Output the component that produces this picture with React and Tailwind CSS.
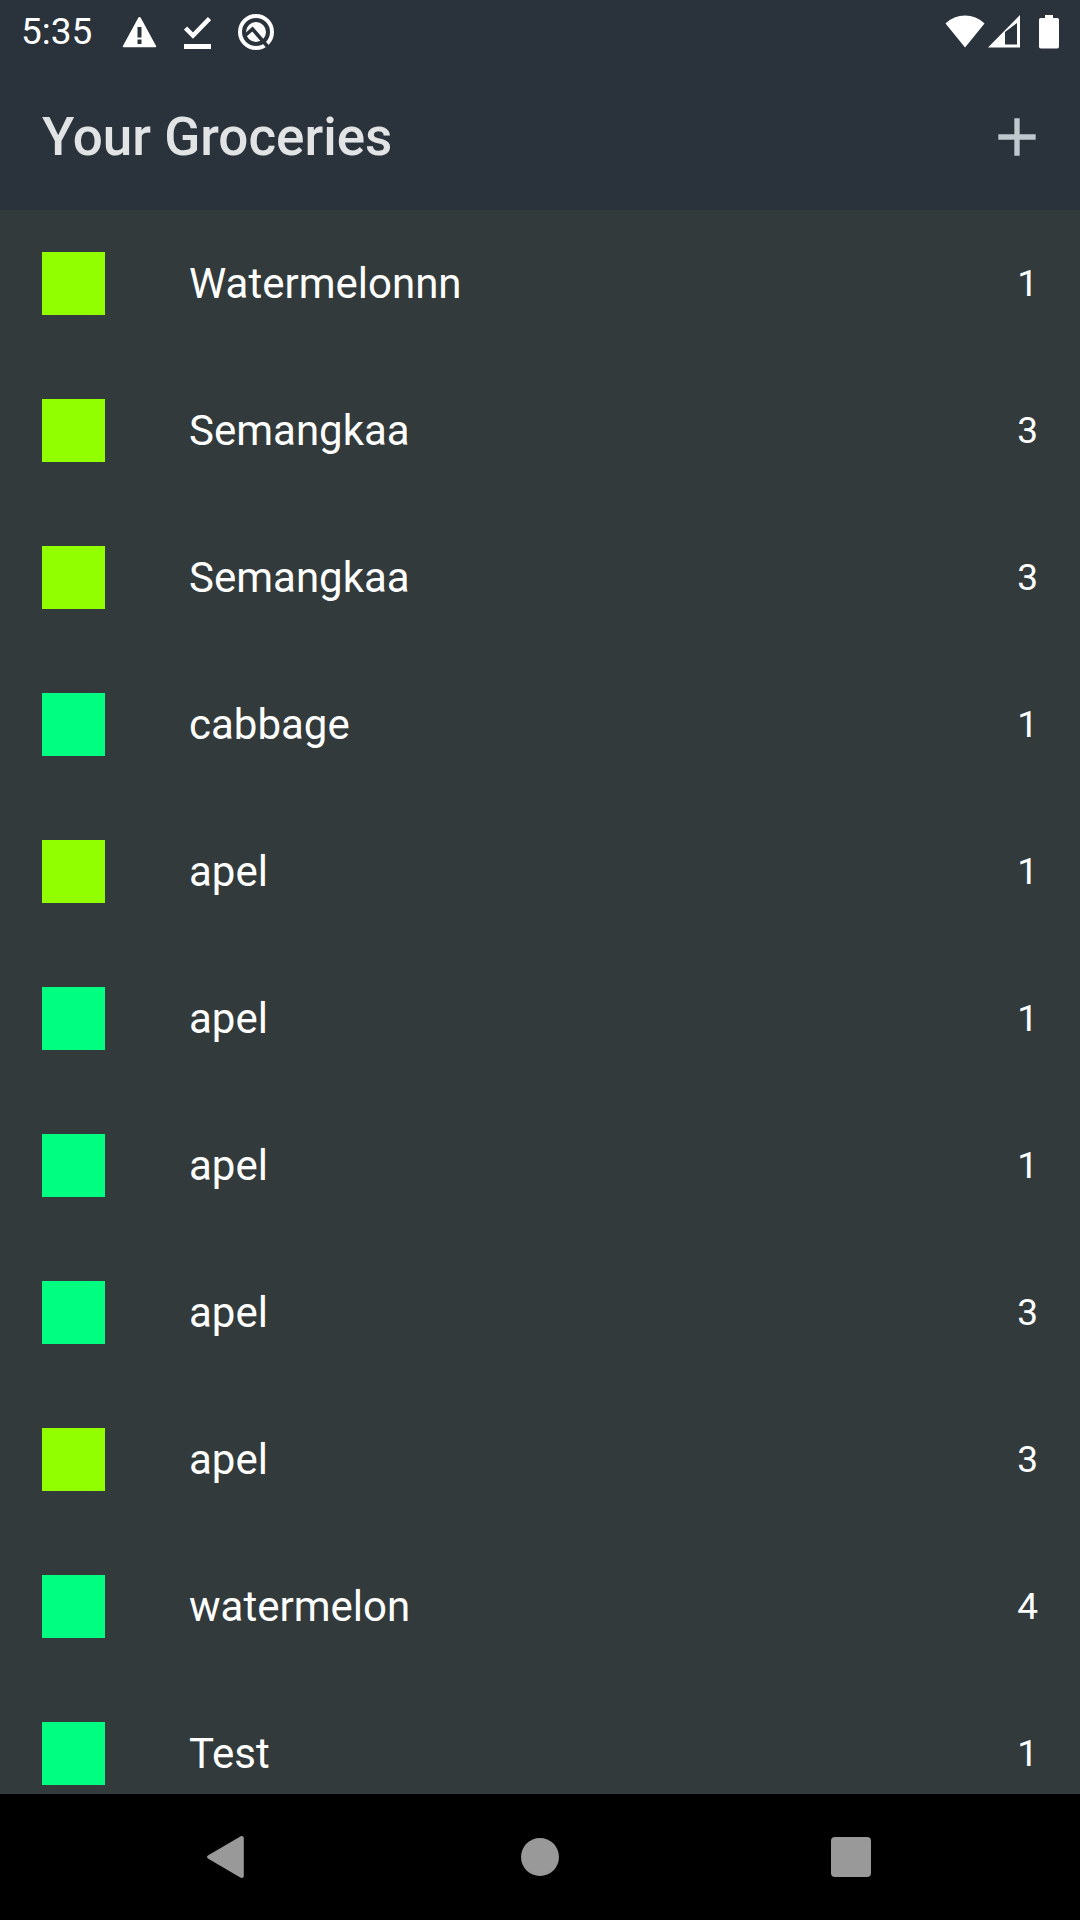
const FRUIT = "bg-[#91ff00]";
const VEGETABLE = "bg-[#00ff80]";

const groceries = [
  { name: "Watermelonnn", quantity: 1, color: FRUIT },
  { name: "Semangkaa", quantity: 3, color: FRUIT },
  { name: "Semangkaa", quantity: 3, color: FRUIT },
  { name: "cabbage", quantity: 1, color: VEGETABLE },
  { name: "apel", quantity: 1, color: FRUIT },
  { name: "apel", quantity: 1, color: VEGETABLE },
  { name: "apel", quantity: 1, color: VEGETABLE },
  { name: "apel", quantity: 3, color: VEGETABLE },
  { name: "apel", quantity: 3, color: FRUIT },
  { name: "watermelon", quantity: 4, color: VEGETABLE },
  { name: "Test", quantity: 1, color: VEGETABLE },
];

function StatusBar() {
  return (
    <div className="flex h-[63px] shrink-0 items-center justify-between pr-[21px] pl-[21px] text-white">
      <div className="flex items-center">
        <span className="mr-[30px] text-[37px] leading-[45px]">5:35</span>
        <div className="flex items-center gap-[27px]">
          <svg className="h-9 w-[35px]" viewBox="0 0 35 36" fill="currentColor" aria-hidden="true">
            <path
              fillRule="evenodd"
              d="M16.400 3.600a1.200 1.200 0 0 1 2.200 0L34.100 32a.9.9 0 0 1-.8 1.300H1.700A.9.900 0 0 1 .9 32ZM15.500 13v10.500h4V13Zm0 12.500v4.500h4v-4.500Z"
            />
          </svg>
          <svg className="h-9 w-[27px]" viewBox="0 0 27 36" aria-hidden="true">
            <path d="M1.500 14 9 21.500 25.500 4.500" fill="none" stroke="currentColor" strokeWidth="4.500" />
            <path d="M0 30h27v5H0z" fill="currentColor" />
          </svg>
          <svg className="h-9 w-9" viewBox="0 0 36 36" aria-hidden="true">
            <circle cx="18" cy="18" r="16" fill="none" stroke="currentColor" strokeWidth="4" />
            <circle cx="18" cy="18" r="10" fill="currentColor" />
            <path d="M6 22.500 14.500 15 30 33" fill="none" stroke="#2a333b" strokeWidth="3.600" />
          </svg>
        </div>
      </div>
      <div className="flex items-center">
        <svg className="mr-[3px] h-9 w-10" viewBox="0 0 40 36" fill="currentColor" aria-hidden="true">
          <path d="M.5 9.500C11-1.200 29-1.200 39.500 9.500L20 33.500Z" />
        </svg>
        <svg className="mr-[19px] h-9 w-8" viewBox="0 0 32 36" fill="currentColor" aria-hidden="true">
          <path fillRule="evenodd" d="M0 33.500 32 1v32.500ZM17 18v12.500h12V9Z" />
        </svg>
        <svg className="h-9 w-5" viewBox="0 0 20 36" fill="currentColor" aria-hidden="true">
          <path d="M6 1h8v3h4.200A1.800 1.800 0 0 1 20 5.800v27A1.800 1.800 0 0 1 18.200 34.600H1.800A1.800 1.800 0 0 1 0 32.800v-27A1.800 1.800 0 0 1 1.800 4H6Z" />
        </svg>
      </div>
    </div>
  );
}

function AppBar() {
  return (
    <div className="flex h-[147px] shrink-0 items-center justify-between pl-[42px]">
      <h1 className="text-[53px] leading-[70px] font-medium text-[#e1e3e4]">Your Groceries</h1>
      <button type="button" aria-label="Add grocery" className="flex h-[126px] w-[126px] items-center justify-center text-[#bfc8cc]">
        <svg className="h-16 w-16" viewBox="0 0 24 24" fill="currentColor" aria-hidden="true">
          <path d="M19 13h-6v6h-2v-6H5v-2h6V5h2v6h6z" />
        </svg>
      </button>
    </div>
  );
}

function GroceryRow({ name, quantity, color }) {
  return (
    <li className="flex h-[147px] items-center px-[42px] text-white">
      <span className={`mr-[84px] h-[63px] w-[63px] shrink-0 ${color}`} />
      <span className="flex-1 text-[42px] leading-[63px]">{name}</span>
      <span className="text-[37px] leading-[54px]">{quantity}</span>
    </li>
  );
}

function NavigationBar() {
  const button = "flex h-full flex-1 items-center justify-center text-[#999999]";
  return (
    <nav className="flex h-[126px] shrink-0 bg-black px-[74px]">
      <button type="button" aria-label="Back" className={button}>
        <svg className="h-12 w-12" viewBox="0 0 48 48" fill="currentColor" aria-hidden="true">
          <path d="M3.300 22.300 35.300 3.400c1.700-.9 3.500-.2 3.500 1.600v38c0 1.800-1.800 2.500-3.500 1.600L3.300 25.700c-1.700-1-1.700-2.400 0-3.400Z" />
        </svg>
      </button>
      <button type="button" aria-label="Home" className={button}>
        <svg className="h-12 w-12" viewBox="0 0 48 48" fill="currentColor" aria-hidden="true">
          <circle cx="24" cy="24" r="19" />
        </svg>
      </button>
      <button type="button" aria-label="Recent apps" className={button}>
        <svg className="h-12 w-12" viewBox="0 0 48 48" fill="currentColor" aria-hidden="true">
          <rect x="4" y="4" width="40" height="40" rx="4" />
        </svg>
      </button>
    </nav>
  );
}

export default function App() {
  return (
    <div className="flex h-screen flex-col bg-[#323a3c] font-['Roboto',sans-serif]">
      <header className="shrink-0 bg-[#2a333b]">
        <StatusBar />
        <AppBar />
      </header>
      <main className="min-h-0 flex-1 overflow-y-auto [scrollbar-width:none]">
        <ul>
          {groceries.map((item, index) => (
            <GroceryRow key={index} {...item} />
          ))}
        </ul>
      </main>
      <NavigationBar />
    </div>
  );
}
